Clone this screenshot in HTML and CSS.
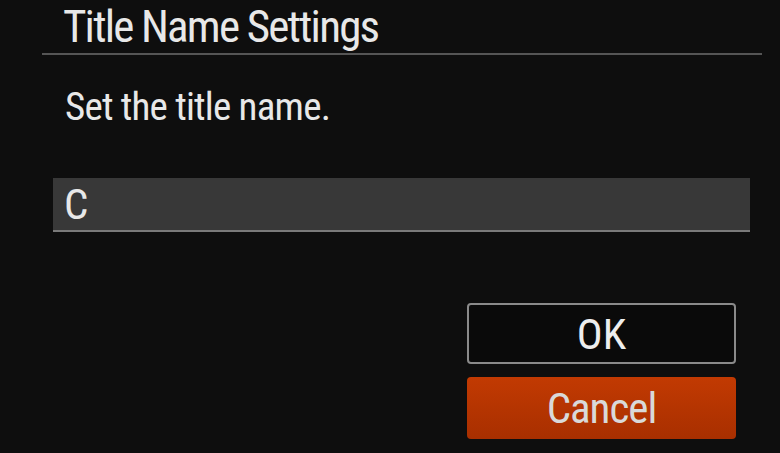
FILE: index.html
```html
<!DOCTYPE html>
<html lang="en">
<head>
    <meta charset="UTF-8">
    <meta name="viewport" content="width=device-width, initial-scale=1.0">
    <title>Title Name Settings</title>
    <link rel="stylesheet" href="styles.css">
</head>
<body>
    <div class="screen">
        <div class="header">
            <h1 class="title">Title Name Settings</h1>
        </div>
        <p class="message">Set the title name.</p>
        <div class="field">C</div>
        <div class="actions">
            <button class="btn btn-ok">OK</button>
            <button class="btn btn-cancel">Cancel</button>
        </div>
    </div>
</body>
</html>
```

FILE: styles.css
```css
body {
    margin: 0;
    background-color: #0e0e0e;
    font-family: Roboto, "Liberation Sans", sans-serif;
    font-stretch: 75%;
    color: #e8e8e8;
}
.screen {
    width: 780px;
    height: 453px;
    overflow: hidden;
}
.header {
    margin-left: 42px;
    width: 720px;
    height: 55px;
    box-sizing: border-box;
    padding-left: 21px;
    border-bottom: 2px solid #555;
}
.title {
    margin: 0;
    font-size: 45px;
    line-height: 53px;
    font-weight: normal;
    letter-spacing: -1.8px;
}
.message {
    margin: 33px 0 0 65px;
    font-size: 39px;
    line-height: 39px;
    letter-spacing: -0.8px;
}
.field {
    margin: 51px 0 0 53px;
    width: 697px;
    height: 54px;
    box-sizing: border-box;
    padding-left: 11px;
    background-color: #383838;
    border-bottom: 2px solid #7a7a7a;
    font-size: 43px;
    line-height: 52px;
}
.actions {
    display: flex;
    flex-direction: column;
    gap: 13px;
    margin: 71px 0 0 467px;
    width: 269px;
}
.btn {
    font-family: inherit;
    font-stretch: inherit;
    font-size: 43px;
    display: flex;
    align-items: center;
    justify-content: center;
    box-sizing: border-box;
    border-radius: 4px;
    padding: 0;
}
.btn-ok {
    height: 61px;
    background-color: #0a0a0a;
    border: 2px solid #8a8a8a;
    color: #eee;
}
.btn-cancel {
    height: 62px;
    border: none;
    background: linear-gradient(#c23a02, #a82f00);
    color: #d9d9d9;
    letter-spacing: -1px;
}
```
